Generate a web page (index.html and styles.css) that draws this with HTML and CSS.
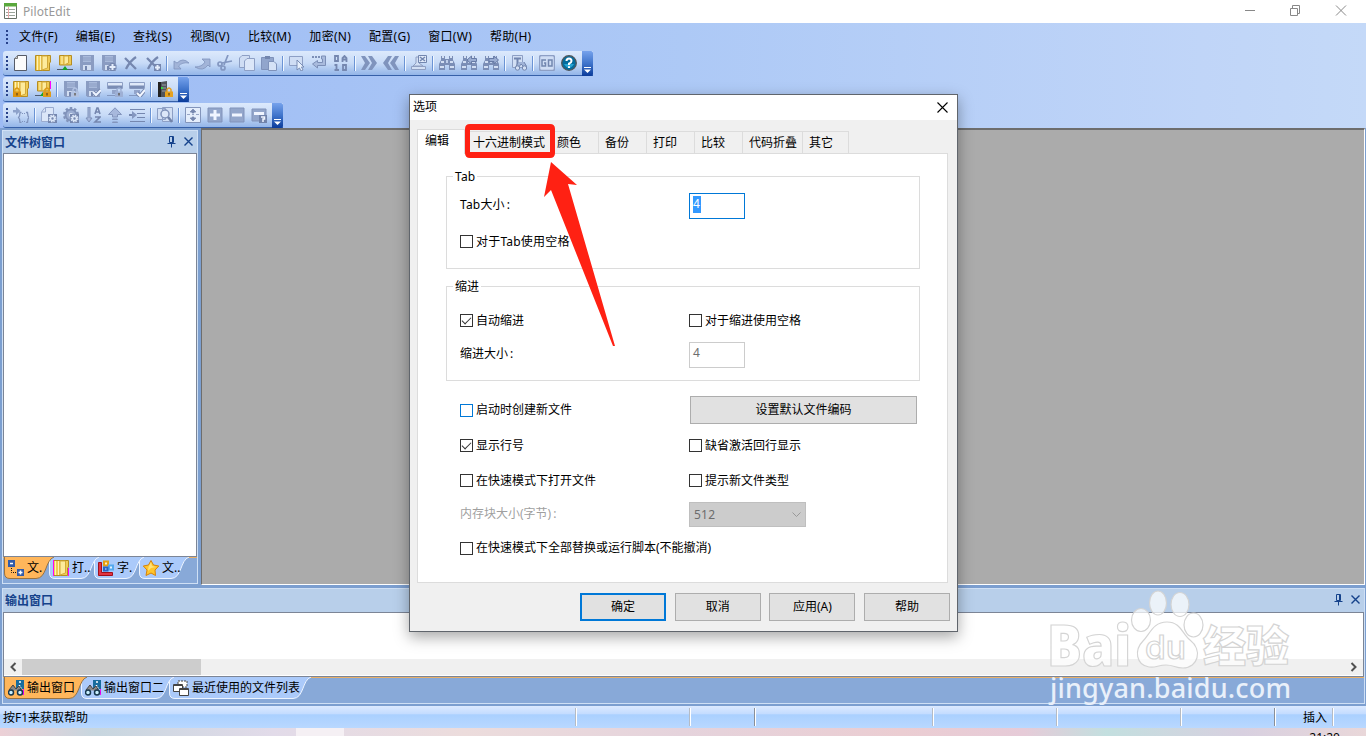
FILE: index.html
```html
<!DOCTYPE html>
<html lang="zh-CN">
<head>
    <meta charset="UTF-8">
    <meta name="viewport" content="width=device-width, initial-scale=1.0">
    <title>PilotEdit</title>
    <link rel="stylesheet" href="styles.css">
</head>
<body>
    <!-- icon sprite -->
    <svg class="sprite">
        <symbol id="i-new" viewBox="0 0 16 16"><path d="M4.500 .500H13.500V15.500H1.500V3.500Z" fill="#fbfbfb" stroke="#555b68"/><path d="M4.500 .500V3.500H1.500" fill="#ccc" stroke="#777"/></symbol>
        <symbol id="i-folder" viewBox="0 0 16 16"><path d="M.500 .500H15.500V7L14.500 8V15.500H.500Z" fill="#f0cb55" stroke="#b58d22"/><path d="M2.500 1V15M5.500 1V15" stroke="#fff2b4"/><path d="M7 1H12.500V13L7 15Z" fill="#fdeb9c" stroke="#d3a93a"/></symbol>
        <symbol id="i-net" viewBox="0 0 16 16"><path d="M2.500 .500H14.500V10H2.500Z" fill="#f0cb55" stroke="#b58d22"/><path d="M5 1V9" stroke="#fff2b4"/><path d="M7 1H11.500V8L7 10Z" fill="#fdeb9c" stroke="#d3a93a"/><path d="M0 14.500H16" stroke="#4f5b70"/><path d="M8 11L11 15H5Z" fill="#15a129"/></symbol>
        <symbol id="i-save" viewBox="0 0 16 16"><path d="M1 0H15V16H2.500L1 14.500Z" fill="#8a9cc2"/><path d="M4 1H12V7H4Z" fill="#a9badb"/><path d="M4 3H12M4 5H12" stroke="#8a9cc2"/><path d="M4 10H12V15H4Z" fill="#d2def2"/><path d="M6 11H8V15H6Z" fill="#7486ae"/></symbol>
        <symbol id="i-saveplus" viewBox="0 0 16 16"><use href="#i-save"/><path d="M11.500 8V16M7.500 12H15.500" stroke="#7587af" stroke-width="4.500"/><path d="M11.500 9V15M8.500 12H14.500" stroke="#e5eefc" stroke-width="2"/></symbol>
        <symbol id="i-x" viewBox="0 0 16 16"><path d="M2 3L13 14M13 2Q7 6 3 14" stroke="#7587af" stroke-width="2.300" fill="none"/></symbol>
        <symbol id="i-xplus" viewBox="0 0 16 16"><use href="#i-x"/><path d="M9 9H16V16H9Z" fill="#7587af"/><path d="M12.500 10V15M10 12.500H15" stroke="#e5eefc" stroke-width="2"/></symbol>
        <symbol id="i-undo" viewBox="0 0 16 16"><path d="M1 6V14H8L5.500 11Q9 7 16 8Q10 2 4 8Z" fill="#a2b4d8" stroke="#7f93bd" stroke-width=".8"/></symbol>
        <symbol id="i-redo" viewBox="0 0 16 16"><path d="M15 4H7L10 7Q7 12 0 12Q8 17 13 10L15 12Z" fill="#a2b4d8" stroke="#7f93bd" stroke-width=".8"/></symbol>
        <symbol id="i-cut" viewBox="0 0 16 16"><g fill="none" stroke="#8397c1" stroke-width="1.700"><path d="M11 0L7 10M15 6L5 8"/><circle cx="3" cy="9" r="2"/><circle cx="6" cy="13" r="2"/></g></symbol>
        <symbol id="i-copy" viewBox="0 0 16 16"><path d="M.500 3L3 .500H10.500V12.500H.500Z" fill="#cfddf4" stroke="#8d9fc5"/><path d="M5.500 6L8 3.500H15.500V15.500H5.500Z" fill="#dbe6f8" stroke="#8d9fc5"/></symbol>
        <symbol id="i-paste" viewBox="0 0 16 16"><path d="M.500 2.500H12.500V14.500H.500Z" fill="#91a5cc" stroke="#7f92ba"/><path d="M4 1H9V4H4Z" fill="#7386ae"/><path d="M7.500 6.500H13L15.500 9V15.500H7.500Z" fill="#d5e2f6" stroke="#7f92ba"/></symbol>
        <symbol id="i-select" viewBox="0 0 16 16"><path d="M.500 1.500H13.500V10.500H.500Z" fill="#cfddf4" stroke="#8d9fc5"/><path d="M8 5V15L10.500 13L12 16L14 15L12.500 12H15Z" fill="#e6effc" stroke="#7286af" stroke-width=".9"/></symbol>
        <symbol id="i-wrap" viewBox="0 0 16 16"><path d="M1 2H9" stroke="#7c8fb7" stroke-width="2" stroke-dasharray="2 1"/><path d="M10.500 1H14.500V10.500H6.500V13L1.500 9L6.500 5.500V7.500H11.500V4H10.500Z" fill="#a9bbdd" stroke="#7c8fb7"/></symbol>
        <symbol id="i-hex" viewBox="0 0 16 16"><g fill="none" stroke="#7587af" stroke-width="1.800"><path d="M2 1H5V6H2ZM9.500 7V3L11.500 1L13.500 3V7M9.500 4.500H13.500M1.500 10H3.500V15M1.500 15H6M10 10H13V15H10Z"/></g></symbol>
        <symbol id="i-next" viewBox="0 0 16 16"><path d="M0 1H4L9 8L4 15H0L4 8ZM7 1H11L16 8L11 15H7L11 8Z" fill="#8094bd"/></symbol>
        <symbol id="i-prev" viewBox="0 0 16 16"><path d="M9 1H5L0 8L5 15H9L5 8ZM16 1H12L7 8L12 15H16L12 8Z" fill="#8094bd"/></symbol>
        <symbol id="i-clear" viewBox="0 0 16 16"><path d="M5 2H8V8L12 11H2L5 8ZM.500 11.500H14.500V14.500H.500Z" fill="#d2dff4" stroke="#8f9fc2"/><path d="M7.500 .500H15.500V7.500H7.500Z" fill="#e2ebfa" stroke="#7286af"/><path d="M9 2L14 6M14 2L9 6" stroke="#7286af" stroke-width="1.500"/></symbol>
        <symbol id="i-bino" viewBox="0 0 16 16"><path d="M2 1H6V4H10V1H14V5L16 9V15H10V10H6V15H0V9L2 5Z" fill="#7b8eb6"/><path d="M3 2H5M11 2H13M2 7H5M11 7H14M1 12H5M11 12H15" stroke="#d3dff3" stroke-width="2"/><path d="M7 5H9V8H7Z" fill="#bdcdea"/></symbol>
        <symbol id="i-binoprev" viewBox="0 0 16 16"><use href="#i-bino"/><path d="M15.500 3.500H10.500V1L6 5L10.500 9V6.500H15.500Z" fill="#9aadd2" stroke="#677ba6"/></symbol>
        <symbol id="i-binonext" viewBox="0 0 16 16"><use href="#i-bino"/><path d="M6 3.500H11V1L15.500 5L11 9V6.500H6Z" fill="#9aadd2" stroke="#677ba6"/></symbol>
        <symbol id="i-find" viewBox="0 0 16 16"><path d="M1.500 .500H11.500V12.500H1.500Z" fill="#d2dff4" stroke="#8d9fc5"/><path d="M3 3.500H10M6.500 3V11" stroke="#7286af" stroke-width="2"/><path d="M7 7L5 12H8L10 9L13 12H16L13 7" fill="#a0b3d7" stroke="#7286af"/><circle cx="6.500" cy="13" r="2.200" fill="#d3dff3" stroke="#7286af"/><circle cx="13.500" cy="13" r="2.200" fill="#d3dff3" stroke="#7286af"/></symbol>
        <symbol id="i-go" viewBox="0 0 16 16"><rect x=".5" y=".5" width="15" height="15" rx="2" fill="#cfddf4" stroke="#8d9fc5" stroke-width="1.500"/><path d="M7 5H3V11H6.500V8H5M9.500 5H13V11H9.500Z" fill="none" stroke="#7286af" stroke-width="1.500"/></symbol>
        <symbol id="i-help" viewBox="0 0 16 16"><circle cx="8" cy="8" r="7.300" fill="#056c9d" stroke="#50565a" stroke-width="1.300"/><path d="M3 9Q8 17 13 9" fill="#27a5d4"/><path d="M5.500 6Q5.500 3.500 8 3.500T10.500 6Q10.500 7.500 8 8.700V10" fill="none" stroke="#fff" stroke-width="2"/><path d="M7 11.300H9V13H7Z" fill="#fff"/></symbol>
        <symbol id="i-padlock" viewBox="0 0 8 10"><path d="M2 5V2.500Q4-.5 6 2.500V5" fill="none" stroke="currentColor" stroke-width="1.400"/><path d="M0 4.500H8V10H0Z" fill="currentColor"/><path d="M4 6V8.500" stroke="#44351a"/></symbol>
        <symbol id="i-lockfolder" viewBox="0 0 16 16"><use href="#i-folder"/><use href="#i-padlock" x="0" y="6" width="8" height="10" color="#dd9410"/></symbol>
        <symbol id="i-locknet" viewBox="0 0 16 16"><use href="#i-net"/><path d="M15.500 0V8" stroke="#f0f"/><use href="#i-padlock" x="8" y="6" width="8" height="10" color="#e09b18"/></symbol>
        <symbol id="i-locksave" viewBox="0 0 16 16"><use href="#i-save"/><use href="#i-padlock" x="8" y="6" width="8" height="10" color="#b1c2e2"/></symbol>
        <symbol id="i-checksave" viewBox="0 0 16 16"><use href="#i-save"/><path d="M8 11L11 14L16 9" stroke="#7587af" stroke-width="4" fill="none"/><path d="M8 11L11 14L16 9" stroke="#edf4ff" stroke-width="2" fill="none"/></symbol>
        <symbol id="i-drive" viewBox="0 0 16 16"><path d="M.500 1.500H15.500V7.500H.500Z" fill="#dfe9f9" stroke="#8d9fc5"/><path d="M1 6H15" stroke="#7a8db5" stroke-width="3"/><path d="M5 9H11V13H5Z" fill="#92a4ca"/><path d="M0 14.500H10" stroke="#8498c0"/></symbol>
        <symbol id="i-lockdrive" viewBox="0 0 16 16"><use href="#i-drive"/><use href="#i-padlock" x="8" y="6" width="8" height="10" color="#9eb0d5"/></symbol>
        <symbol id="i-checkdrive" viewBox="0 0 16 16"><use href="#i-drive"/><path d="M8 12L11 15L16 9" stroke="#7587af" stroke-width="4" fill="none"/><path d="M8 12L11 15L16 9" stroke="#f3f7ff" stroke-width="2" fill="none"/></symbol>
        <symbol id="i-server" viewBox="0 0 16 16"><path d="M1 1H4V16H1Z" fill="#222"/><path d="M4 1L10 0V16H4Z" fill="#50555d"/><path d="M5 4H9M5 7H9M5 10H9" stroke="#9aa0a9"/><path d="M4 6H6V8H4Z" fill="#35d447"/><use href="#i-padlock" x="8" y="6" width="8" height="10" color="#e6a11f"/></symbol>
        <symbol id="i-regex" viewBox="0 0 16 16"><path d="M0 3H3V0L7.500 4L3 8V5.500H0Z" fill="#8ea2ca"/><path d="M8.500 5.500H7L6.500 9L5.500 10.500L6.500 12L7 15.500H8.500M13 5.500H14.500L15 9L16 10.500L15 12L14.500 15.500H13" fill="none" stroke="#8094bd" stroke-width="1.300"/><path d="M9 6.500H12.500M9 14.500H12.500" stroke="#8094bd" stroke-dasharray="1 1"/></symbol>
        <symbol id="i-gear" viewBox="0 0 16 16"><circle cx="8" cy="8" r="5.500" fill="#9caed2" stroke="#8193ba" stroke-width="2"/><circle cx="8" cy="8" r="7" fill="none" stroke="#8193ba" stroke-width="2" stroke-dasharray="2.500 2"/><circle cx="8" cy="8" r="2" fill="#dce7f8"/></symbol>
        <symbol id="i-filegear" viewBox="0 0 16 16"><path d="M.500 5L4 .500H12.500V14.500H.500Z" fill="#dbe6f8" stroke="#9aabcf"/><path d="M4.500 .500V5H1" fill="none" stroke="#9aabcf"/><path d="M7 7H16V16H7Z" fill="#7587af"/><circle cx="11.500" cy="11.500" r="3.200" fill="none" stroke="#dce7f8" stroke-width="1.500" stroke-dasharray="1.500 1"/><circle cx="11.500" cy="11.500" r="2" fill="none" stroke="#dce7f8" stroke-width="1.600"/></symbol>
        <symbol id="i-gears" viewBox="0 0 16 16"><use href="#i-gear"/><path d="M7 7H16V16H7Z" fill="#7587af"/><circle cx="11.500" cy="11.500" r="3.200" fill="none" stroke="#dce7f8" stroke-width="1.500" stroke-dasharray="1.500 1"/><circle cx="11.500" cy="11.500" r="2" fill="none" stroke="#dce7f8" stroke-width="1.600"/></symbol>
        <symbol id="i-sort" viewBox="0 0 16 16"><path d="M3 0H5V11H7L4 15L1 11H3Z" fill="#a7b8dc" stroke="#7e91b9"/><path d="M10 7L12 1H13L15 7M11 5H14M10 10H15L10 15H16" fill="none" stroke="#7587af" stroke-width="1.600"/></symbol>
        <symbol id="i-up" viewBox="0 0 16 16"><path d="M5.500 7.500H1.500L8 .800L14.500 7.500H10.500V10H5.500ZM5.500 12H10.500V12.500H5.500ZM5.500 15H10.500V15.500H5.500Z" fill="#a7b8dc" stroke="#8395bd"/></symbol>
        <symbol id="i-indent" viewBox="0 0 16 16"><path d="M1 2.500H16M8 6.500H16M8 10.500H16M1 14.500H16" stroke="#7587af"/><path d="M0 8H5" stroke="#7587af" stroke-width="2"/><path d="M3 4L8 8L3 12Z" fill="#8497c0"/></symbol>
        <symbol id="i-lookup" viewBox="0 0 16 16"><path d="M.500 1.500H8.500V12.500H.500ZM5.500 .500H15.500V14.500H5.500Z" fill="#d2dff4" stroke="#8d9fc5"/><circle cx="8" cy="7" r="4" fill="#dce7f8" stroke="#8193ba" stroke-width="1.500"/><path d="M11 10L15 15" stroke="#7183aa" stroke-width="2.500"/></symbol>
        <symbol id="i-updown" viewBox="0 0 16 16"><path d="M.500 .500H15.500V15.500H.500Z" fill="#e4edfb" stroke="#8395bb"/><path d="M8 2L11 5H9V6H7V5H5ZM8 14L11 11H9V10H7V11H5ZM2 7.500H5M7 7.500H9M11 7.500H14" fill="#7587af" stroke="#7587af" stroke-width=".7"/></symbol>
        <symbol id="i-plus" viewBox="0 0 16 16"><path d="M1 1H15V15H1Z" fill="#93a6cb" stroke="#8193ba"/><path d="M8 3V13M3 8H13" stroke="#f0f5ff" stroke-width="3"/></symbol>
        <symbol id="i-minus" viewBox="0 0 16 16"><path d="M1 1H15V15H1Z" fill="#93a6cb" stroke="#8193ba"/><path d="M3 8H13" stroke="#f0f5ff" stroke-width="3"/></symbol>
        <symbol id="i-ask" viewBox="0 0 16 16"><path d="M1 2H15V14H1Z" fill="#93a6cb" stroke="#8193ba"/><path d="M3 6.500H13" stroke="#f0f5ff" stroke-width="3"/><path d="M8 8H16V16H8Z" fill="#7183aa"/><path d="M10 10H13.500V12H12V15" fill="none" stroke="#f0f5ff" stroke-width="1.500"/></symbol>
        <symbol id="i-tree" viewBox="0 0 16 16"><path d="M0 0H7V7H0ZM9 9H16V16H9Z" fill="#335ba9"/><path d="M2 3.500H5M10.500 12.500H14.500M12.500 10.500V14.500" stroke="#fff" stroke-width="1.500"/><path d="M3.500 8V12.500H9" fill="none" stroke="#111" stroke-dasharray="1 1"/></symbol>
        <symbol id="i-opened" viewBox="0 0 16 16"><use href="#i-folder"/><path d="M.500 0V16M15.500 8V16" stroke="#f0f"/></symbol>
        <symbol id="i-chars" viewBox="0 0 16 16"><path d="M.500 2.500H3.500V12.500H14.500V15.500H.500Z" fill="#e23440" stroke="#a10f1c"/><path d="M6 1.500H10V5.500H6Z" fill="#fff1c0" stroke="#e6a010" stroke-width="2"/><path d="M11 5.500H15V9.500H11Z" fill="#e5f4ff" stroke="#55a9ee" stroke-width="2"/><path d="M6 7.500H9.500V10.500H6Z" fill="#dbe9ff" stroke="#2867c8" stroke-width="2"/></symbol>
        <symbol id="i-star" viewBox="0 0 16 16"><path d="M8 .500L10.500 5L15.800 6L12 10L12.500 15.500L8 13L3 15.500L4 10L.300 6L5.500 5Z" fill="#ffc52c" stroke="#d78208"/><path d="M8 2L9 6L13 7L8 8L5 11L5.500 7Z" fill="#ffe27a"/></symbol>
        <symbol id="i-output" viewBox="0 0 16 16"><path d="M8 0H16V9H8Z" fill="#176c9d"/><path d="M11 2H13M11.500 5V8M10.500 8H13.500" stroke="#fff" stroke-width="1.500"/><path d="M15.500 9V15" stroke="#f0f"/><path d="M1 10L5 5L8 9L11 6L14 11" fill="#888" stroke="#444"/><circle cx="3" cy="12.500" r="2.500" fill="#c9f0ff" stroke="#17384e" stroke-width="1.500"/><circle cx="12" cy="12.500" r="2.500" fill="#c9f0ff" stroke="#17384e" stroke-width="1.500"/></symbol>
        <symbol id="i-recent" viewBox="0 0 16 16"><g fill="#fff" stroke="#444"><path d="M5 1H14V7H5Z" stroke-dasharray="2 1"/><path d="M.500 4.500H9.500V11.500H.500Z"/><path d="M6.500 8.500H15.500V15.500H6.500Z"/></g><path d="M1 5H9M7 9H15" stroke="#444" stroke-width="2"/></symbol>
        <symbol id="i-pin" viewBox="0 0 9 12"><path d="M2.500 .500H6.500V6.500H2.500ZM.500 7.500H8.500M4.500 7V11.500M5.500 1V6" fill="none" stroke="#15428b"/></symbol>
        <symbol id="i-close" viewBox="0 0 9 9"><path d="M.500 .500L8.500 8.500M8.500 .500L.500 8.500" stroke="#15428b" stroke-width="1.400"/></symbol>
        <symbol id="i-more" viewBox="0 0 7 6"><path d="M0 .500H7" stroke="#fff"/><path d="M0 2.500H7L3.500 6Z" fill="#fff"/></symbol>
    </svg>

    <div class="titlebar">
        <svg class="logo" viewBox="0 0 13 16"><path d="M.500 1.500H12.500V15.500H.500Z" fill="#fff" stroke="#667066"/><path d="M0 0H13V3.500H0Z" fill="#5aa83c"/><path d="M2 6.500H11M2 9.500H11M2 12.500H11" stroke="#9ba59b"/><path d="M4.500 4V15" stroke="#e9aaaa"/></svg>
        <span class="app-name">PilotEdit</span>
        <svg class="win-btns" viewBox="0 0 102 11"><path d="M0 5.500H10M45.500 3.500H52.500V10.500H45.500ZM47.500 3V.500H54.500V8.500H53M91 .500L101 10.500M101 .500L91 10.500" fill="none" stroke="#888"/></svg>
    </div>

    <div class="chrome">
        <div class="menu">
            <i class="grip"></i>
            <span>文件(F)</span><span>编辑(E)</span><span>查找(S)</span><span>视图(V)</span><span>比较(M)</span><span>加密(N)</span><span>配置(G)</span><span>窗口(W)</span><span>帮助(H)</span>
        </div>
        <div class="toolbar">
            <i class="grip"></i>
            <svg><use href="#i-new"/></svg><svg><use href="#i-folder"/></svg><svg><use href="#i-net"/></svg><svg><use href="#i-save"/></svg><svg><use href="#i-saveplus"/></svg><svg><use href="#i-x"/></svg><svg><use href="#i-xplus"/></svg>
            <i class="sep"></i>
            <svg><use href="#i-undo"/></svg><svg><use href="#i-redo"/></svg><svg><use href="#i-cut"/></svg><svg><use href="#i-copy"/></svg><svg><use href="#i-paste"/></svg>
            <i class="sep"></i>
            <svg><use href="#i-select"/></svg><svg><use href="#i-wrap"/></svg><svg><use href="#i-hex"/></svg>
            <i class="sep"></i>
            <svg><use href="#i-next"/></svg><svg><use href="#i-prev"/></svg>
            <i class="sep"></i>
            <svg><use href="#i-clear"/></svg>
            <i class="sep"></i>
            <svg><use href="#i-bino"/></svg><svg><use href="#i-binoprev"/></svg><svg><use href="#i-binonext"/></svg>
            <i class="sep"></i>
            <svg><use href="#i-find"/></svg>
            <i class="sep"></i>
            <svg><use href="#i-go"/></svg><svg><use href="#i-help"/></svg>
            <b class="cap"><svg><use href="#i-more"/></svg></b>
        </div>
        <div class="toolbar">
            <i class="grip"></i>
            <svg><use href="#i-lockfolder"/></svg><svg><use href="#i-locknet"/></svg>
            <i class="sep"></i>
            <svg><use href="#i-locksave"/></svg><svg><use href="#i-checksave"/></svg><svg><use href="#i-lockdrive"/></svg><svg><use href="#i-checkdrive"/></svg>
            <i class="sep"></i>
            <svg><use href="#i-server"/></svg>
            <b class="cap"><svg><use href="#i-more"/></svg></b>
        </div>
        <div class="toolbar">
            <i class="grip"></i>
            <svg><use href="#i-regex"/></svg>
            <i class="sep"></i>
            <svg><use href="#i-filegear"/></svg><svg><use href="#i-gears"/></svg><svg><use href="#i-sort"/></svg><svg><use href="#i-up"/></svg><svg><use href="#i-indent"/></svg>
            <i class="sep"></i>
            <svg><use href="#i-lookup"/></svg>
            <i class="sep"></i>
            <svg><use href="#i-updown"/></svg><svg><use href="#i-plus"/></svg><svg><use href="#i-minus"/></svg><svg><use href="#i-ask"/></svg>
            <b class="cap"><svg><use href="#i-more"/></svg></b>
        </div>
    </div>

    <div class="main">
        <div class="pane tree-pane">
            <div class="pane-head"><span>文件树窗口</span><svg class="pin"><use href="#i-pin"/></svg><svg class="close"><use href="#i-close"/></svg></div>
            <div class="pane-body"></div>
            <div class="pane-tabs">
                <div class="ptab t1 active"><svg class="shape" width="51" height="22"><path d="M.500 0V16Q.500 21.500 6 21.500H32C43 21.500 41 3 50 0"/></svg><svg class="ico"><use href="#i-tree"/></svg>文.</div>
                <div class="ptab t2"><svg class="shape" width="51" height="22"><path d="M.500 0V16Q.500 21.500 6 21.500H32C43 21.500 41 3 50 0"/></svg><svg class="ico"><use href="#i-opened"/></svg>打..</div>
                <div class="ptab t3"><svg class="shape" width="51" height="22"><path d="M.500 0V16Q.500 21.500 6 21.500H32C43 21.500 41 3 50 0"/></svg><svg class="ico"><use href="#i-chars"/></svg>字.</div>
                <div class="ptab t4"><svg class="shape" width="51" height="22"><path d="M.500 0V16Q.500 21.500 6 21.500H32C43 21.500 41 3 50 0"/></svg><svg class="ico"><use href="#i-star"/></svg>文..</div>
            </div>
        </div>
        <div class="workspace"></div>
    </div>

    <div class="output">
        <div class="pane">
            <div class="pane-head"><span>输出窗口</span><svg class="pin"><use href="#i-pin"/></svg><svg class="close"><use href="#i-close"/></svg></div>
            <div class="pane-body">
                <div class="scroll">
                    <svg viewBox="0 0 17 16"><path d="M11 4L7 8L11 12" fill="none" stroke="#505050" stroke-width="2"/></svg>
                    <i class="thumb"></i>
                    <svg viewBox="0 0 17 16"><path d="M6 4L10 8L6 12" fill="none" stroke="#505050" stroke-width="2"/></svg>
                </div>
            </div>
            <div class="pane-tabs">
                <div class="ptab o1 active"><svg class="shape" width="84" height="22"><path d="M.500 0V16Q.500 21.500 6 21.500H65C76 21.500 74 3 83 0"/></svg><svg class="ico"><use href="#i-output"/></svg>输出窗口</div>
                <div class="ptab o2"><svg class="shape" width="94" height="22"><path d="M.500 0V16Q.500 21.500 6 21.500H75C86 21.500 84 3 93 0"/></svg><svg class="ico"><use href="#i-output"/></svg>输出窗口二</div>
                <div class="ptab o3"><svg class="shape" width="143" height="22"><path d="M.500 0V16Q.500 21.500 6 21.500H124C135 21.500 133 3 142 0"/></svg><svg class="ico"><use href="#i-recent"/></svg>最近使用的文件列表</div>
            </div>
        </div>
    </div>

    <div class="status">
        <span class="hint">按F1来获取帮助</span><i class="s1"></i><i class="s2"></i><i class="s3 dark"></i><i class="s4"></i><i class="s5"></i><i class="s6"></i><i class="s7 dark"></i><span class="mode">插入</span><i></i>
    </div>
    <div class="taskbar"><i class="task"></i><span class="clock">21:20</span></div>

    <div class="dialog">
        <div class="dlg-title"><span>选项</span><svg viewBox="0 0 11 11"><path d="M.500 .500L10.500 10.500M10.500 .500L.500 10.500" stroke="#000" stroke-width="1.100"/></svg></div>
        <div class="dlg-tabs">
            <span class="sel">编辑</span><span class="w85">十六进制模式</span><span>颜色</span><span>备份</span><span>打印</span><span>比较</span><span class="w60">代码折叠</span><span class="w46">其它</span>
        </div>
        <div class="page">
            <div class="group g1">
                <div class="legend">Tab</div>
                <div class="row r-tab"><label>Tab大小<span class="colon">:</span></label><div class="input focus"><span class="hl">4</span></div></div>
                <div class="row r-space"><label><i class="box"></i>对于Tab使用空格</label></div>
            </div>
            <div class="group g2">
                <div class="legend">缩进</div>
                <div class="row r-auto"><label><i class="box on"></i>自动缩进</label><label><i class="box"></i>对于缩进使用空格</label></div>
                <div class="row r-size"><label>缩进大小<span class="colon">:</span></label><div class="input">4</div></div>
            </div>
            <div class="options">
                <div class="row h28"><label><i class="box hot"></i>启动时创建新文件</label><div class="btn wide">设置默认文件编码</div></div>
                <div class="row"><label><i class="box on"></i>显示行号</label><label><i class="box"></i>缺省激活回行显示</label></div>
                <div class="row"><label><i class="box"></i>在快速模式下打开文件</label><label><i class="box"></i>提示新文件类型</label></div>
                <div class="row h24"><label class="off">内存块大小(字节)<span class="colon">:</span></label><div class="combo">512<svg viewBox="0 0 9 6"><path d="M.500 .500L4.500 4.500L8.500 .500" fill="none" stroke="#999"/></svg></div></div>
                <div class="row h28"><label><i class="box"></i>在快速模式下全部替换或运行脚本(不能撤消)</label></div>
            </div>
        </div>
        <div class="dlg-btns"><div class="btn default">确定</div><div class="btn">取消</div><div class="btn">应用(A)</div><div class="btn">帮助</div></div>
    </div>

    <!-- red marker and arrow -->
    <svg class="marker" width="152" height="225" viewBox="0 0 152 225">
        <path d="M6 0H86Q91 0 91 5V29Q91 34 86 34H6Q1 34 1 29V5Q1 0 6 0ZM6 6V28H86V6Z" fill="#ff2113" fill-rule="evenodd"/>
        <path d="M87 38L113 61L104 60L151 222L149 222L87 66L80 73Z" fill="#ff2113"/>
    </svg>

    <svg class="watermark" width="250" height="120" viewBox="1045 588 250 120">
        <g class="wm-big">
            <text x="1047" y="666" textLength="84" lengthAdjust="spacingAndGlyphs" font-size="56">Bai</text>
            <ellipse cx="1141" cy="620" rx="9.500" ry="11.500"/>
            <ellipse cx="1158" cy="603" rx="8.500" ry="12"/>
            <ellipse cx="1180" cy="604.500" rx="9" ry="12"/>
            <ellipse cx="1193.500" cy="625" rx="9.500" ry="12"/>
            <path d="M1167 622C1181 622 1182 634 1190 640C1203 650 1198 668 1183 668C1175 668 1174 665 1166 665C1158 665 1156 668 1149 667C1136 665 1134 650 1143 641C1150 634 1153 622 1167 622Z"/>
            <text class="wm-du" x="1145" y="659" textLength="41" lengthAdjust="spacingAndGlyphs" font-size="33">du</text>
            <text class="wm-cjk" x="1203" y="662" textLength="86" lengthAdjust="spacingAndGlyphs" font-size="43">经验</text>
        </g>
        <text class="wm-url" x="1050" y="698" textLength="241" font-size="27">jingyan.baidu.com</text>
    </svg>
</body>
</html>
```
FILE: styles.css
```css
*{
    box-sizing: border-box;
}
body {
    margin: 0;
    width: 1366px;
    height: 736px;
    overflow: hidden;
    position: relative;
    font-family: "Noto Sans", "Noto Sans CJK SC", sans-serif;
    font-size: 12px;
    line-height: 16px;
    color: #000;
    background-color: #7c9fd0;
    white-space: nowrap;
}
.sprite {
    display: none;
}
.titlebar {
    height: 23px;
    background-color: #fff;
    display: flex;
    align-items: center;
    padding: 0 19px 2px 4px;
}
.logo {
    width: 13px;
    height: 16px;
}
.app-name {
    margin: 2px 0 0 6px;
    color: #999;
    letter-spacing: 0.1px;
}
.win-btns {
    margin-left: auto;
    width: 102px;
    height: 11px;
}

/* menu and toolbars */
.chrome {
    height: 105px;
    background: linear-gradient(to right, #9dbbf4, #adc9f6 50%, #c0d5f8 88%, #c4d9f8);
}
.menu {
    display: flex;
    align-items: center;
    gap: 18px;
    height: 28px;
    padding-left: 6px;
    letter-spacing: 0.27px;
}
.grip {
    width: 2px;
    height: 14px;
    background: repeating-linear-gradient(to bottom, #27418a 0 2px, transparent 2px 4px);
}
.menu .grip {
    margin-right: -7px;
}
.toolbar {
    display: flex;
    align-items: center;
    width: max-content;
    height: 25px;
    margin: 0 0 1px 3px;
    padding-left: 3px;
    background: linear-gradient(#dce9fc, #c8dbf7 50%, #93b5e8);
    border-bottom: 1px solid #3660a8;
    border-radius: 3px 0 0 3px;
}
.toolbar .grip {
    margin-right: 2px;
}
.toolbar > svg {
    width: 16px;
    height: 16px;
    margin: 0 3px;
}
.sep {
    width: 2px;
    height: 15px;
    margin: 0 2px;
    background: linear-gradient(to right, #6b94d5 50%, #f1f7ff 50%);
}
.cap {
    width: 11px;
    height: 25px;
    margin-left: 2px;
    align-self: flex-start;
    display: flex;
    align-items: flex-end;
    justify-content: center;
    padding-bottom: 3px;
    background: linear-gradient(#76a2ec, #3f74cb 50%, #0a3b9a);
    border-radius: 0 2px 2px 0;
}
.cap svg {
    width: 7px;
    height: 6px;
}

/* docked panes */
.main {
    display: flex;
    height: 458px;
}
.pane {
    border: 1px solid #cfe0f5;
    background-color: #88a9d8;
    display: flex;
    flex-direction: column;
}
.tree-pane {
    width: 196px;
    margin: 2px 3px 2px 2px;
}
.pane-head {
    height: 22px;
    padding: 0 4px 0 2px;
    background-color: #b8cfea;
    color: #15428b;
    font-weight: bold;
    display: flex;
    align-items: center;
}
.pane-head span {
    flex: 1;
    padding-top: 2px;
}
.pin {
    width: 9px;
    height: 12px;
    margin-bottom: 1px;
}
.close {
    width: 9px;
    height: 9px;
    margin: 0 0 2px 8px;
}
.pane-body {
    flex: 1;
    background-color: #fff;
    border: 1px solid #7c8596;
    display: flex;
    align-items: flex-end;
}
.pane-tabs {
    height: 26px;
    padding-left: 1px;
    border-top: 1px solid #e9b069;
    display: flex;
}
.workspace {
    flex: 1;
    margin: 0 1px 1px 0;
    background-color: #ababab;
    border: 1px solid #fff;
    border-top: 2px solid #6d6d6d;
    border-left: 1px solid #6d6d6d;
}
.ptab {
    position: relative;
    height: 20px;
    display: flex;
    align-items: center;
    padding-left: 4px;
    isolation: isolate;
}
.ptab .shape {
    position: absolute;
    left: 0;
    top: -1px;
    z-index: -1;
}
.shape path {
    fill: #abcafa;
    stroke: #edf4ff;
}
.active .shape path {
    fill: #ffb65b;
    stroke: #9a7340;
}
.ico {
    width: 16px;
    height: 16px;
    margin-right: 3px;
}
.t1, .t2, .t3 {
    width: 45px;
}
.t1, .o1 { z-index: 4; }
.t2, .o2 { z-index: 3; }
.t3, .o3 { z-index: 2; }
.o1 { width: 77px; }
.o2 { width: 88px; }
.output {
    height: 120px;
    padding: 2px 1px 2px 2px;
}
.output .pane {
    height: 116px;
}
.output .pane-head {
    height: 23px;
}
.output .pane-head span {
    padding-top: 1px;
}
.scroll {
    width: 100%;
    height: 16px;
    margin-bottom: 1px;
    background-color: #f0f0f0;
    display: flex;
}
.scroll svg {
    width: 18px;
    height: 16px;
}
.thumb {
    width: 179px;
    margin-right: auto;
    background-color: #cdcdcd;
}

.status {
    height: 22px;
    background: linear-gradient(#dceaff, #c4dcff 35%, #aad0ff 40%, #b9d8ff);
    display: flex;
    align-items: center;
}
.status .hint {
    width: 575px;
    padding: 2px 0 0 3px;
}
.status i {
    height: 18px;
    border-left: 1px solid #b5bbc4;
    box-shadow: 1px 0 #fff;
    /* the highlight must not outline the far edge of the cell */
    clip-path: inset(0 0 0 0);
    background: linear-gradient(#fff, #fff) 0 0 / 1px 100% no-repeat;
}
.status i.dark {
    border-color: #8a8f98;
}
.s1 { width: 114px; }
.s2 { width: 65px; }
.s3 { width: 178px; }
.s4 { width: 124px; }
.s5 { width: 124px; }
.s6 { width: 94px; }
.s7 { width: 10px; }
.status .mode {
    width: 48px;
    padding: 2px 0 0 19px;
}
.status i:last-child {
    width: 10px;
}
.taskbar {
    height: 8px;
    overflow: hidden;
    display: flex;
    background: linear-gradient(to right, #ecd0d6, #c7d6df 7%, #e2dbe9 20%, #ecdcdc 34%, #e5d3dc 50%, #ebcdd2 66%, #e6cbd8 75%, #c3dfdf 81%, #d8d0e0 91%, #e9d7d9);
}
.task {
    width: 48px;
    margin-left: 296px;
    background-color: #f5f0f4;
}
.clock {
    margin: 2px 26px 0 auto;
}

/* options dialog */
.dialog {
    position: absolute;
    left: 409px;
    top: 94px;
    width: 549px;
    height: 538px;
    border: 1px solid #60656c;
    background-color: #f0f0f0;
    box-shadow: 0 5px 14px rgba(0, 0, 0, 0.35);
}
.dlg-title {
    height: 25px;
    padding: 0 9px 1px 3px;
    background-color: #fff;
    display: flex;
    align-items: center;
    justify-content: space-between;
}
.dlg-title svg {
    width: 11px;
    height: 11px;
}
.dlg-tabs {
    height: 33px;
    padding-left: 7px;
    display: flex;
    align-items: flex-end;
}
.dlg-tabs span {
    width: 48px;
    height: 22px;
    padding: 3px 0 0 6px;
    border-top: 1px solid #dcdcdc;
    border-right: 1px solid #dcdcdc;
}
.dlg-tabs .sel {
    height: 25px;
    margin-bottom: -1px;
    padding-left: 7px;
    background-color: #fff;
    border-left: 1px solid #dcdcdc;
    position: relative;
}
.dlg-tabs .w85 { width: 86px; padding-left: 8px; }
.dlg-tabs .w60 { width: 60px; }
.dlg-tabs .w46 { width: 46px; }
.page {
    width: 531px;
    height: 430px;
    margin-left: 7px;
    padding-top: 22px;
    background-color: #fff;
    border: 1px solid #dcdcdc;
}
.group {
    width: 474px;
    margin-left: 28px;
    padding-left: 13px;
    border: 1px solid #dcdcdc;
}
.g1 {
    height: 93px;
}
.g2 {
    height: 95px;
    margin-top: 17px;
}
.legend {
    width: max-content;
    height: 16px;
    margin: -9px 0 0 -7px;
    padding: 1px 2px 0;
    background-color: #fff;
}
.g1 .legend, .r-tab label, .r-space label {
    letter-spacing: 0.2px;
}
.row {
    display: grid;
    grid-template-columns: 229px auto;
    justify-content: start;
    align-items: center;
    height: 27px;
}
.row label {
    display: flex;
    align-items: center;
}
.colon {
    margin-left: 2px;
}
.r-tab { height: 44px; }
.r-tab label, .r-size label { padding-bottom: 3px; }
.r-space { height: 27px; }
.r-auto { height: 31px; margin-top: 11px; }
.r-size { height: 38px; }
.h28 { height: 28px; }
.h24 { height: 24px; }
.options {
    display: flex;
    flex-direction: column;
    gap: 8px;
    padding: 15px 0 0 42px;
}
.box {
    flex: none;
    width: 13px;
    height: 13px;
    margin-right: 3px;
    border: 1px solid #333;
    background-color: #fff;
}
.box.hot {
    border-color: #0078d7;
}
.box.on::after {
    content: "";
    display: block;
    width: 8px;
    height: 4px;
    margin: 2px 0 0 1px;
    border-left: 1.4px solid #333;
    border-bottom: 1.4px solid #333;
    transform: rotate(-45deg);
}
.input {
    width: 56px;
    height: 26px;
    padding: 2px 3px;
    border: 1px solid #ccc;
    color: #6d6d6d;
}
.input.focus {
    border-color: #0078d7;
}
.hl {
    display: inline-block;
    width: 8px;
    height: 17px;
    background-color: #3399ff;
    color: #fff;
}
.off {
    color: #9f9f9f;
    padding-bottom: 2px;
}
.combo {
    width: 117px;
    height: 25px;
    padding: 0 4px;
    border: 1px solid #bfbfbf;
    background-color: #ccc;
    color: #6d6d6d;
    display: flex;
    align-items: center;
    justify-content: space-between;
    letter-spacing: 0.2px;
}
.combo svg {
    width: 9px;
    height: 6px;
}
.btn {
    width: 86px;
    height: 28px;
    background-color: #e1e1e1;
    border: 1px solid #adadad;
    display: flex;
    align-items: center;
    justify-content: center;
}
.btn.wide {
    width: 227px;
    margin-left: 1px;
}
.btn.default {
    border: 2px solid #0078d7;
}
.dlg-btns {
    display: flex;
    justify-content: space-between;
    width: 370px;
    margin: 10px 0 0 170px;
}

/* things drawn over the window */
.marker {
    position: absolute;
    left: 464px;
    top: 124px;
}
.watermark {
    position: absolute;
    left: 1045px;
    top: 588px;
}
.wm-big {
    fill: rgba(255, 255, 255, 0.72);
    stroke: #d4d4d4;
    stroke-width: 1.2px;
    font-family: "Open Sans", sans-serif;
    font-weight: 800;
}
.wm-big .wm-cjk {
    font-family: "Noto Sans CJK SC", sans-serif;
    font-weight: 900;
}
.wm-big .wm-du {
    font-family: Inter, sans-serif;
    font-weight: 500;
}
.wm-url {
    fill: #e9f0fa;
    font-family: "Noto Sans", sans-serif;
    font-weight: 500;
}
```
